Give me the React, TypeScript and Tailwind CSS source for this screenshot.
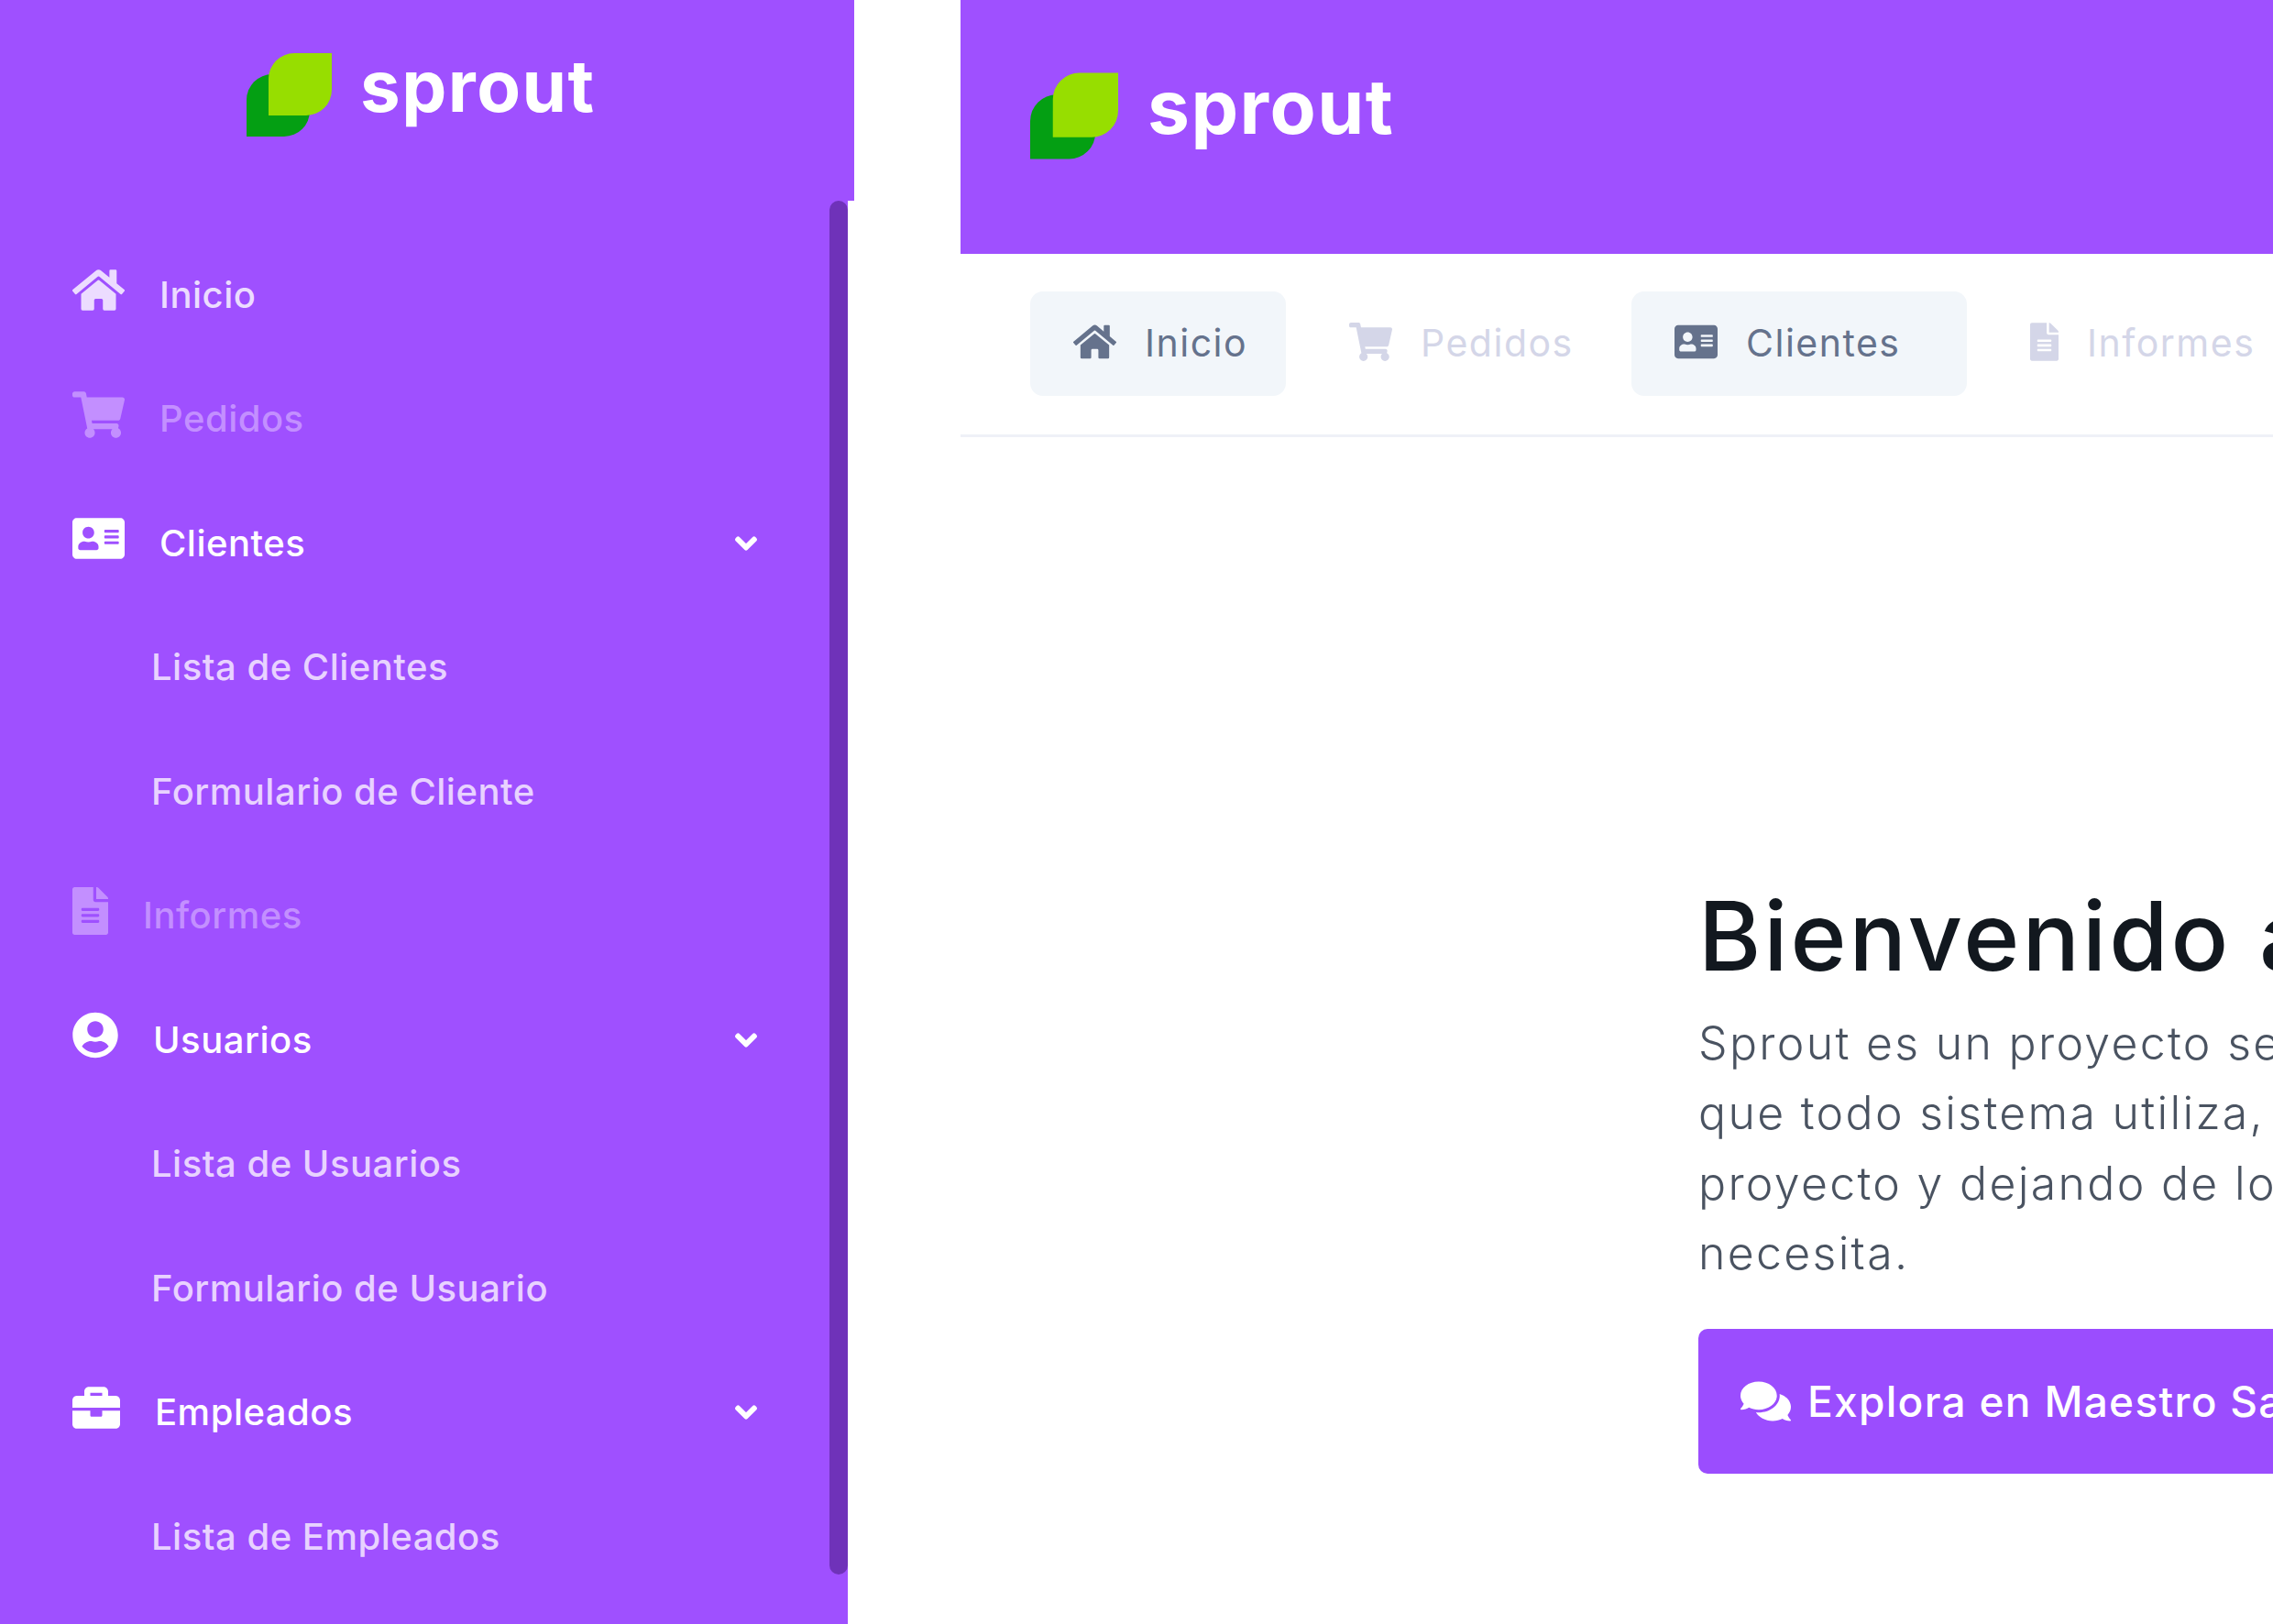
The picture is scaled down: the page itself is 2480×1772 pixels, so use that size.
import { FaHome, FaShoppingCart, FaAddressCard, FaFileAlt, FaUserCircle, FaBriefcase, FaChevronDown, FaComments } from "react-icons/fa";
import type { IconType } from "react-icons";

const font = { fontFamily: '"Inter", "Liberation Sans", sans-serif' };

function Logo({ className, textClass }: { className: string; textClass: string }) {
  return (
    <div className="flex items-center">
      <svg viewBox="0 0 93 91" className={className}>
        <path d="M0 91V51a28 28 0 0 1 28-28h41v40a28 28 0 0 1-28 28z" fill="#049f13" />
        <path d="M24 68V28A28 28 0 0 1 52 0h41v40a28 28 0 0 1-28 28z" fill="#97de00" />
      </svg>
      <span className={textClass}>sprout</span>
    </div>
  );
}

type Row = { label: string; Icon?: IconType; iconClass?: string; tone: "soft" | "off" | "on" | "sub"; chevron?: boolean };

const rows: Row[] = [
  { label: "Inicio", Icon: FaHome, iconClass: "w-[57px] h-[51px]", tone: "soft" },
  { label: "Pedidos", Icon: FaShoppingCart, iconClass: "w-[57px] h-[51px]", tone: "off" },
  { label: "Clientes", Icon: FaAddressCard, iconClass: "w-[57px] h-[51px]", tone: "on", chevron: true },
  { label: "Lista de Clientes", tone: "sub" },
  { label: "Formulario de Cliente", tone: "sub" },
  { label: "Informes", Icon: FaFileAlt, iconClass: "w-[39px] h-[52px]", tone: "off" },
  { label: "Usuarios", Icon: FaUserCircle, iconClass: "w-[50px] h-[51px]", tone: "on", chevron: true },
  { label: "Lista de Usuarios", tone: "sub" },
  { label: "Formulario de Usuario", tone: "sub" },
  { label: "Empleados", Icon: FaBriefcase, iconClass: "w-[52px] h-[52px]", tone: "on", chevron: true },
  { label: "Lista de Empleados", tone: "sub" },
];

const tones = {
  soft: "text-[#ecdcff]",
  off: "text-[#c38fff]",
  on: "text-white",
  sub: "text-[#e8d2ff]",
};

function SideRow({ row }: { row: Row }) {
  const { Icon } = row;
  return (
    <div className={`flex h-[135.5px] items-center gap-[38px] pr-[78px] text-[40px] font-medium tracking-[0.5px] ${row.Icon ? "pl-[79px]" : "pl-[165px]"} ${tones[row.tone]}`}>
      {Icon && <Icon className={`${row.iconClass} mb-[10px] shrink-0`} />}
      <span className="whitespace-nowrap">{row.label}</span>
      {row.chevron && <FaChevronDown stroke="currentColor" strokeWidth={36} className="ml-auto h-[26px] w-[26px] text-white" />}
    </div>
  );
}

type Tab = { label: string; Icon: IconType; iconClass: string; active: boolean; tw: string };
const tabs: Tab[] = [
  { label: "Inicio", Icon: FaHome, iconClass: "w-[47px] h-[42px]", active: true, tw: "w-[279px]" },
  { label: "Pedidos", Icon: FaShoppingCart, iconClass: "w-[47px] h-[42px]", active: false, tw: "w-[333px]" },
  { label: "Clientes", Icon: FaAddressCard, iconClass: "w-[47px] h-[42px]", active: true, tw: "w-[366px]" },
  { label: "Informes", Icon: FaFileAlt, iconClass: "w-[31px] h-[42px]", active: false, tw: "w-[340px]" },
];

function TopTab({ tab }: { tab: Tab }) {
  const { Icon } = tab;
  return (
    <div className={`flex h-[114px] shrink-0 items-center gap-[31px] rounded-[14px] pl-[47px] text-[41px] tracking-[1.5px] ${tab.tw} ${tab.active ? "bg-[#f2f6fa] text-[#65728c]" : "text-[#d4d6e8]"}`}>
      <Icon className={`${tab.iconClass} mb-[4px] shrink-0`} />
      <span className="whitespace-nowrap">{tab.label}</span>
    </div>
  );
}

export default function App() {
  return (
    <div className="flex h-[1772px] w-[2480px] overflow-hidden bg-white" style={font}>
      <aside className="flex h-full w-[932px] shrink-0 flex-col">
        <div className="h-[219px] w-[932px] bg-[#9f50ff] pl-[269px] pt-[58px]">
          <Logo className="h-[91px] w-[93px]" textClass="ml-[31px] -mt-[19px] text-[78px] font-bold leading-none tracking-[1.5px] text-white" />
        </div>
        <div className="flex w-[925px] flex-1 bg-[#9f50ff]">
          <nav className="flex-1 pt-[35px]">
            {rows.map((r) => (
              <SideRow key={r.label} row={r} />
            ))}
          </nav>
          <div className="h-[1499px] w-[20px] shrink-0 rounded-[10px] bg-[#6f32b9]" />
        </div>
      </aside>

      <main className="ml-[116px] flex min-w-0 flex-1 flex-col">
        <header className="h-[277px] bg-[#9f50ff] pl-[76px] pt-[78px]">
          <Logo className="h-[97px] w-[96px]" textClass="ml-[32px] -mt-[19px] text-[82px] font-bold leading-none tracking-[1.5px] text-white" />
        </header>
        <div className="flex h-[200px] items-start gap-[22px] border-b-[3px] border-[#eff1f7] pl-[76px] pt-[41px]">
          {tabs.map((t) => (
            <TopTab key={t.label} tab={t} />
          ))}
        </div>
        <section className="overflow-hidden pl-[805px] pt-[484px]">
          <h1 className="whitespace-nowrap text-[104px] font-medium leading-[120px] tracking-[3px] text-[#12181f]">Bienvenido a</h1>
          <div className="mt-[19px] whitespace-nowrap text-[50px] font-light leading-[76.3px] tracking-[2.3px] text-[#4a5361]">
            <p>Sprout es un proyecto se</p>
            <p>que todo sistema utiliza,</p>
            <p>proyecto y dejando de lo</p>
            <p>necesita.</p>
          </div>
          <div className="mt-[45px] flex h-[158px] w-[800px] items-center gap-[18px] rounded-[10px] bg-[#9b4dfe] pl-[46px] text-[46px] font-medium tracking-[1.3px] text-white">
            <FaComments className="h-[54px] w-[55px] shrink-0" />
            <span className="whitespace-nowrap">Explora en Maestro Sa</span>
          </div>
        </section>
      </main>
    </div>
  );
}
